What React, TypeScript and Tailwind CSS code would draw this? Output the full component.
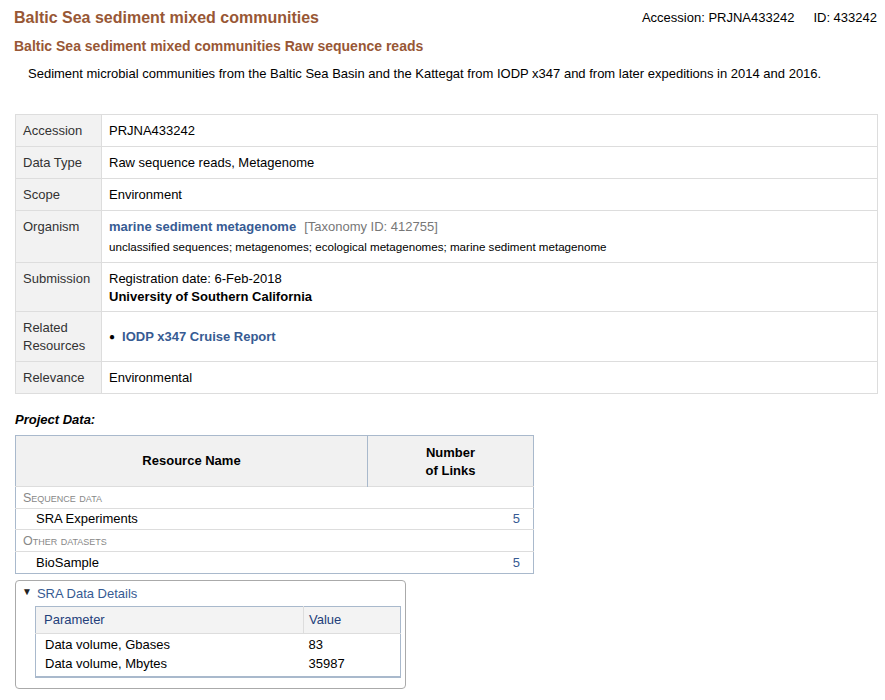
import React from 'react';

const brown = 'text-[#985735]';

const InfoRow = ({ label, children, tight }: { label: React.ReactNode; children: React.ReactNode; tight?: boolean }) => (
  <tr className="border-t border-[#dddddd] align-top">
    <td className={`w-[86px] bg-[#f2f2f2] border-r border-[#dddddd] pl-[7px] pr-1 pt-[7px] text-[#333333] ${tight ? 'pb-[5px]' : 'pb-[6px]'}`}>{label}</td>
    <td className={`pl-[7px] pr-2 pt-[7px] text-black ${tight ? 'pb-[5px]' : 'pb-[6px]'}`}>{children}</td>
  </tr>
);

const App = () => {
  return (
    <div className="bg-white min-h-[700px] pl-[14px] pr-[8px] pt-[8px] text-[13px] leading-[18px] text-black font-['Liberation_Sans',Arial,sans-serif]">
      <div className="flex items-start justify-between">
        <h1 className={`text-[16px] leading-[20px] font-bold ${brown}`}>Baltic Sea sediment mixed communities</h1>
        <div className="flex gap-[19px] pt-[1px] text-[13px]">
          <span>Accession: PRJNA433242</span>
          <span>ID: 433242</span>
        </div>
      </div>
      <h2 className={`mt-[9px] text-[14px] leading-[18px] font-bold ${brown}`}>
        Baltic Sea sediment mixed communities Raw sequence reads
      </h2>
      <p className="mt-[10px] pl-[14px]">
        Sediment microbial communities from the Baltic Sea Basin and the Kattegat from IODP x347 and from later expeditions in 2014 and 2016.
      </p>

      <table className="mt-[31px] ml-[1px] w-[863px] border-collapse border border-[#dddddd]">
        <tbody>
          <InfoRow label="Accession">PRJNA433242</InfoRow>
          <InfoRow label="Data Type">Raw sequence reads, Metagenome</InfoRow>
          <InfoRow label="Scope">Environment</InfoRow>
          <InfoRow label="Organism">
            <div>
              <span className="font-bold text-[#375b93]">marine sediment metagenome</span>
              <span className="ml-[8px] text-[#777777]">[Taxonomy ID: 412755]</span>
            </div>
            <div className="mt-[2px] text-[11.6px] leading-[18px]">
              unclassified sequences; metagenomes; ecological metagenomes; marine sediment metagenome
            </div>
          </InfoRow>
          <InfoRow label="Submission" tight>
            <div>Registration date: 6-Feb-2018</div>
            <div className="font-bold">University of Southern California</div>
          </InfoRow>
          <InfoRow label={<>Related<br />Resources</>}>
            <div className="flex items-center h-[36px] gap-[7px]">
              <span className="text-[10px]">●</span>
              <span className="font-bold text-[#375b93]">IODP x347 Cruise Report</span>
            </div>
          </InfoRow>
          <InfoRow label="Relevance">Environmental</InfoRow>
        </tbody>
      </table>

      <div className="mt-[17px] ml-[1px] font-bold italic">Project Data:</div>

      <table className="mt-[6px] ml-[1px] w-[519px] border-collapse border border-[#a9b9cc] text-[13px]">
        <thead>
          <tr className="h-[51px] bg-[#f1f1f1]">
            <th className="border-r border-[#a9b9cc] font-bold text-[13px] leading-[18px] text-center">Resource Name</th>
            <th className="w-[166px] pt-[2px] font-bold text-[13px] leading-[18px] text-center">
              Number<br />of Links
            </th>
          </tr>
        </thead>
        <tbody>
          <tr className="h-[22px] border-t border-[#dddddd]">
            <td colSpan={2} className="pl-[7px] text-[12.5px] text-[#888888] [font-variant:small-caps]">Sequence data</td>
          </tr>
          <tr className="h-[21px] border-t border-[#dddddd]">
            <td className="pl-[20px]">SRA Experiments</td>
            <td className="pr-[13px] text-right text-[#375b93]">5</td>
          </tr>
          <tr className="h-[22px] border-t border-[#dddddd]">
            <td colSpan={2} className="pl-[7px] text-[12.5px] text-[#888888] [font-variant:small-caps]">Other datasets</td>
          </tr>
          <tr className="h-[22px] border-t border-[#dddddd]">
            <td className="pl-[20px]">BioSample</td>
            <td className="pr-[13px] text-right text-[#375b93]">5</td>
          </tr>
        </tbody>
      </table>

      <div className="mt-[6px] ml-[1px] w-[391px] rounded-[4px] border border-[#aaaaaa] pl-[6px] pr-[4px] pt-[3px] pb-[10px]">
        <div className="flex items-center gap-[5px] h-[20px]">
          <span className="text-[10px] leading-none text-[#222222] -mt-[5px]">▼</span>
          <span className="text-[#375b93]">SRA Data Details</span>
        </div>
        <table className="ml-[13px] mt-[2px] w-[366px] border-collapse border border-[#a9b9cc] border-b-2">
          <thead>
            <tr className="h-[27px] bg-[#f3f3f3] border-b border-[#dddddd]">
              <th className="w-[268px] pl-[8px] text-left font-normal text-[#23407a] border-r border-[#dddddd]">Parameter</th>
              <th className="pl-[5px] text-left font-normal text-[#23407a]">Value</th>
            </tr>
          </thead>
          <tbody>
            <tr className="h-[21px]">
              <td className="pl-[9px] pt-[2px]">Data volume, Gbases</td>
              <td className="pl-[5px] pt-[2px]">83</td>
            </tr>
            <tr className="h-[22px]">
              <td className="pl-[9px] pb-[3px]">Data volume, Mbytes</td>
              <td className="pl-[5px] pb-[3px]">35987</td>
            </tr>
          </tbody>
        </table>
      </div>
    </div>
  );
};

export default App;
